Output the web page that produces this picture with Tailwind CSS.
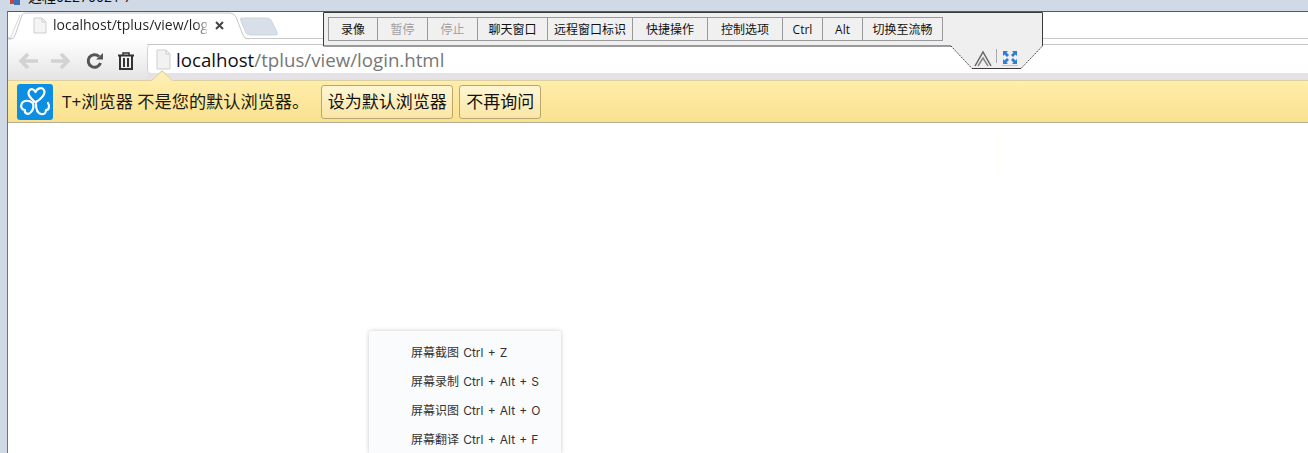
<!DOCTYPE html>
<html lang="en">
<head>
    <meta charset="UTF-8">
    <script src="https://cdn.jsdelivr.net/npm/@tailwindcss/browser@4"></script>
    <title>远程窗口</title>
</head>
<body class="relative h-[453px] w-[1308px] overflow-hidden bg-white font-['Open_Sans','Noto_Sans_CJK_SC',sans-serif]">
    <!-- window title strip -->
    <div class="flex h-[11px] items-end gap-[6px] overflow-hidden bg-[#d0dae6] pl-[9px]">
        <svg class="mb-[5px] h-[12px] w-[12px] shrink-0" viewBox="0 0 12 12"><rect x="1" y="1" width="6" height="9" fill="#c8443c"/><rect x="5" y="4" width="6" height="7" fill="#3b6fb8"/></svg>
        <span class="mb-[7px] ml-[1px] text-[14px] leading-[14px] text-[#111]">远程02270021 7</span>
    </div>

    <div class="flex h-[442px]">
        <div class="w-[7px] shrink-0 bg-[#d0dae6]"></div>
        <div class="flex min-w-0 flex-1 flex-col border-l border-[#6f7276] border-t border-t-[#555a60]">
            <!-- tab strip -->
            <div class="relative h-[27px] shrink-0 border-b border-[#c9c9c9] bg-white">
                <svg class="absolute left-0 top-0 h-[28px] w-[280px]" viewBox="0 0 280 28" fill="none">
                    <path d="M0 27 L3 27 Q6 27 7.500 22 L14 3 Q15 1 18 1 L222 1 Q226 1 228 5 L235 23 Q236 27 241 27" fill="#fff" stroke="#c4c7cc"/>
                    <path d="M0 26 L3 25 L12 3" stroke="#d8d8d8"/>
                    <path d="M233 6 Q232 6 233 9 L238 21 Q239 23 243 23 L268 23 Q270 23 269 20 L263 8 Q262 6 258 6 Z" fill="#d8dfe9" stroke="#cdd5e0"/>
                </svg>
                <div class="absolute left-[25px] top-0 flex h-[26px] w-[205px] items-center">
                    <svg class="h-[17px] w-[14px] shrink-0" viewBox="0 0 14 17" fill="none"><path d="M1 1 H9 L13 5 V16 H1 Z" fill="#f4f4f4" stroke="#cfcfcf"/><path d="M9 1 V5 H13" stroke="#cfcfcf"/></svg>
                    <span class="ml-[6px] w-[154px] whitespace-nowrap bg-gradient-to-r from-[#222] from-92% to-[#ccc] bg-clip-text text-[14px] leading-[20px] text-transparent">localhost/tplus/view/log</span>
                    <svg class="ml-[8px] h-[9px] w-[9px] shrink-0" viewBox="0 0 9 9"><path d="M1 1 L8 8 M8 1 L1 8" stroke="#444" stroke-width="2"/></svg>
                </div>
            </div>

            <!-- toolbar -->
            <div class="flex h-[41px] shrink-0 bg-gradient-to-b from-white to-[#e4e4e4]">
                <div class="flex w-[139px] shrink-0 items-center pl-[11px] pt-[3px]">
                    <svg class="h-[18px] w-[20px]" viewBox="0 0 20 18" fill="none"><path d="M9 2 L2 9 L9 16 M2 9 H19" stroke="#d2d2d2" stroke-width="3.500"/></svg>
                    <svg class="ml-[11px] h-[18px] w-[20px]" viewBox="0 0 20 18" fill="none"><path d="M11 2 L18 9 L11 16 M18 9 H1" stroke="#d2d2d2" stroke-width="3.500"/></svg>
                    <svg class="ml-[16px] h-[18px] w-[18px]" viewBox="0 0 18 18" fill="none"><path d="M14.500 11 A6.300 6.300 0 1 1 13 4.500" stroke="#555" stroke-width="3"/><path d="M10 7.500 H17 V1 Z" fill="#555"/></svg>
                    <svg class="ml-[13px] h-[18px] w-[18px]" viewBox="0 0 18 18" fill="none"><path d="M1 3.500 H17" stroke="#333" stroke-width="2"/><path d="M6 3 V1 H12 V3" stroke="#333" stroke-width="1.500"/><path d="M3 4 V17 H15 V4" stroke="#333" stroke-width="2"/><path d="M7 6 V15 M11 6 V15" stroke="#333" stroke-width="2"/></svg>
                </div>
                <div class="flex flex-1 flex-col">
                    <div class="h-[6px] border-b border-[#c9c9c9]"></div>
                    <div class="flex h-[28px] items-center rounded-l-[4px] border-l border-[#d2d2d2] bg-white pl-[8px]">
                        <svg class="h-[21px] w-[15px] shrink-0" viewBox="0 0 15 21" fill="none"><path d="M1 1 H10 L14 5 V20 H1 Z" fill="#f2f2f2" stroke="#cfcfcf"/><path d="M10 1 V5 H14" stroke="#cfcfcf"/></svg>
                        <span class="ml-[5px] mt-px whitespace-nowrap text-[18.700px] leading-[26px] text-[#777]"><span class="text-[#111]">localhost</span>/tplus/view/login.html</span>
                    </div>
                    <div class="flex-1 bg-[#e4e2e7]"></div>
                </div>
            </div>

            <!-- default browser bar -->
            <div class="relative flex h-[43px] shrink-0 items-center border-t border-[#d9cfa0] border-b border-b-[#b3ad96] bg-gradient-to-b from-[#ffedaa] to-[#f9e18f] pl-[9px]">
                <div class="flex h-[36px] w-[36px] shrink-0 items-center justify-center rounded-[3px] bg-[#0c8ee2]">
                    <svg class="h-[34px] w-[34px]" viewBox="0 0 34 34" fill="none" stroke="#fff" stroke-width="2.200" stroke-linejoin="round" stroke-linecap="round"><path d="M17 17 C12 13 9 9 11 6 C13 3 16 4 17.500 7 C19 3 24 2 26 5 C28 9 23 14 18 17"/><path d="M15 18 C11 15 6 15 4 18 C2 22 4 25 7 25 C6 29 11 30 13 27 C15 25 16 22 15 18 Z"/><path d="M18 19 C18 24 19 28 23 29 C27 30 28 27 28 25 C31 25 32 21 30 18"/></svg>
                </div>
                <span class="ml-[9px] whitespace-nowrap text-[17.200px] leading-[22px] text-[#1d1a10]">T+浏览器 不是您的默认浏览器。</span>
                <button class="ml-[12px] h-[34px] w-[132px] rounded-[3px] border border-[#b9a76e] bg-gradient-to-b from-[#fff6d2] to-[#f9e6a6] text-[17px] text-[#111]">设为默认浏览器</button>
                <button class="ml-[6px] h-[34px] w-[82px] rounded-[3px] border border-[#b9a76e] bg-gradient-to-b from-[#fff6d2] to-[#f9e6a6] text-[17px] text-[#111]">不再询问</button>
                <svg class="absolute left-[142px] top-[-11px] h-[11px] w-[24px]" viewBox="0 0 24 11" fill="none"><path d="M0 11 L12 0 L24 11 Z" fill="#fdeeb5"/><path d="M1 11 L12 1 L23 11" stroke="#d4cba6"/></svg>
            </div>

            <div class="relative flex-1 overflow-hidden bg-white">
                <div class="absolute left-[987px] top-[9px] h-[48px] w-[6px] bg-[#fefefb]"></div>
                <!-- context menu -->
                <div class="absolute left-[361px] top-[208px] h-[122px] w-[192px] overflow-hidden rounded-t-[2px] bg-[#fafbfd] pl-[42px] pt-[7px] font-['Inter','Noto_Sans_CJK_SC',sans-serif] text-[12px] text-[#333] [word-spacing:0.8px] shadow-[0_0_4px_rgba(0,0,0,0.22)]">
                    <div class="flex h-[29px] items-center whitespace-nowrap">屏幕截图 Ctrl + Z</div>
                    <div class="flex h-[29px] items-center whitespace-nowrap">屏幕录制 Ctrl + Alt + S</div>
                    <div class="flex h-[29px] items-center whitespace-nowrap">屏幕识图 Ctrl + Alt + O</div>
                    <div class="flex h-[29px] items-center whitespace-nowrap">屏幕翻译 Ctrl + Alt + F</div>
                </div>
            </div>
        </div>
    </div>

    <!-- remote session floating bar -->
    <div class="absolute left-[323px] top-[12px] h-[57px] w-[721px]">
        <svg class="absolute left-0 top-0 h-[57px] w-[721px]" viewBox="0 0 721 57" fill="none">
            <path d="M0.500 0.500 H719.500 V34 L698 56.500 H649 L628 34 H0.500 Z" fill="#efefef"/>
            <path d="M0.500 34 V0.500 H719.500 V34" stroke="#3c3c3c"/>
            <path d="M0.500 34 H628" stroke="#3c3c3c"/>
            <path d="M628 34 L649 56.500 H698 L719.500 34" stroke="#3c3c3c" stroke-dasharray="1.500 1"/>
            <path d="M649 56.500 H698" stroke="#3c3c3c"/>
        </svg>
        <div class="relative flex pl-[5px] pt-[5px] text-[12px] text-[#111] [&>div]:flex [&>div]:h-[24px] [&>div]:items-center [&>div]:justify-center [&>div]:border [&>div]:border-[#999] [&>div]:bg-[#f0f0f0] [&>div]:pt-[2px]">
            <div class="w-[50px]">录像</div>
            <div class="ml-[-1px] w-[51px] !text-[#a0a0a0]">暂停</div>
            <div class="ml-[-1px] w-[51px] !text-[#a0a0a0]">停止</div>
            <div class="ml-[-1px] w-[71px]">聊天窗口</div>
            <div class="ml-[-1px] w-[86px]">远程窗口标识</div>
            <div class="ml-[-1px] w-[76px]">快捷操作</div>
            <div class="ml-[-1px] w-[76px]">控制选项</div>
            <div class="ml-[-1px] w-[41px]">Ctrl</div>
            <div class="ml-[-1px] w-[41px]">Alt</div>
            <div class="ml-[-1px] w-[81px]">切换至流畅</div>
        </div>
        <svg class="absolute left-[651px] top-[37px] h-[18px] w-[18px]" viewBox="0 0 18 18" fill="none"><path d="M1 17 L9 3 L17 17" stroke="#666" stroke-width="1.500"/><path d="M4 17 L9 9 L14 17" stroke="#888" stroke-width="1.500"/></svg>
        <div class="absolute left-[673px] top-[37px] h-[14px] w-px bg-[#a8a8a8]"></div>
        <svg class="absolute left-[679px] top-[38px] h-[16px] w-[16px]" viewBox="0 0 16 16" fill="none"><path d="M1 1 H6 L4.500 2.500 L7 5 L5 7 L2.500 4.500 L1 6 Z" fill="#2a7fd6"/><path d="M15 1 H10 L11.500 2.500 L9 5 L11 7 L13.500 4.500 L15 6 Z" fill="#2a7fd6"/><path d="M1 14 H6 L4.500 12.500 L7 10 L5 8 L2.500 10.500 L1 9 Z" fill="#2a7fd6"/><path d="M15 14 H10 L11.500 12.500 L9 10 L11 8 L13.500 10.500 L15 9 Z" fill="#2a7fd6"/><path d="M0 15.500 H16" stroke="#b8c8dc"/></svg>
    </div>
</body>
</html>
